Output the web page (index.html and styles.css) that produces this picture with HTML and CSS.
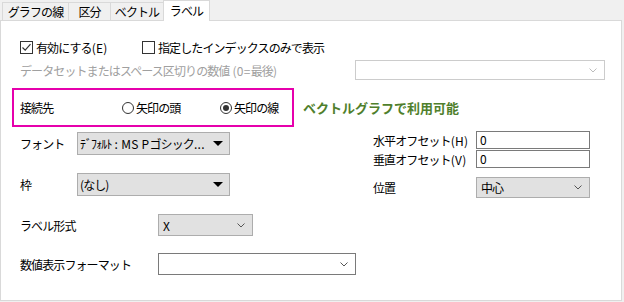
FILE: index.html
```html
<!DOCTYPE html>
<html lang="ja">
<head>
  <meta charset="UTF-8" />
  <title>ラベル</title>
  <link rel="stylesheet" href="styles.css">
</head>
<body>

<!-- tabs -->
<div class="tabs">
  <div class="tab t1">グラフの線</div>
  <div class="tab t2">区分</div>
  <div class="tab t3">ベクトル</div>
  <div class="tab t4 active">ラベル</div>
</div>

<div class="panel">

  <div class="check-row">
    <label class="check first">
      <span class="box">
        <svg viewBox="0 0 11 11" class="tick"><path d="M1.5 5.5 L4.2 8.2 L9.5 2.2" /></svg>
      </span>
      <span>有効にする<span class="lat">(E)</span></span>
    </label>
    <label class="check">
      <span class="box"></span>
      指定したインデックスのみで表示
    </label>
  </div>

  <div class="data-row">
    <span class="muted">データセットまたはスペース区切りの数値<span class="lat">&nbsp;(0=</span>最後<span class="lat">)</span></span>
    <div class="combo disabled">
      <span></span>
      <svg viewBox="0 0 8 5" class="chev"><path d="M0.5 0.5 L4 4 L7.5 0.5" /></svg>
    </div>
  </div>

  <div class="connect-row">
    <div class="connect">
      <span class="connect-label">接続先</span>
      <label class="radio r1"><span class="dot"></span>矢印の頭</label>
      <label class="radio"><span class="dot on"></span>矢印の線</label>
    </div>
    <span class="note">ベクトルグラフで利用可能</span>
  </div>

  <div class="cols">
    <div class="col-left">
      <div class="field font-row">
        <span class="lbl w57">フォント</span>
        <div class="combo classic w153">
          <span>ﾃﾞﾌｫﾙﾄ<span class="lat"> : MS P</span>ゴシック<span class="lat">...</span></span>
          <span class="tri"></span>
        </div>
      </div>
      <div class="field frame-row">
        <span class="lbl w57">枠</span>
        <div class="combo classic w153">
          <span>(なし)</span>
          <span class="tri"></span>
        </div>
      </div>
    </div>

    <div class="col-right">
      <div class="field">
        <span class="lbl w103">水平オフセット<span class="lat">(H)</span></span>
        <div class="input">0</div>
      </div>
      <div class="field off2">
        <span class="lbl w103">垂直オフセット<span class="lat">(V)</span></span>
        <div class="input">0</div>
      </div>
      <div class="field pos-row">
        <span class="lbl w103">位置</span>
        <div class="combo w114">
          <span>中心</span>
          <svg viewBox="0 0 8 5" class="chev"><path d="M0.5 0.5 L4 4 L7.5 0.5" /></svg>
        </div>
      </div>
    </div>
  </div>

  <div class="field fmt-row">
    <span class="lbl w138">ラベル形式</span>
    <div class="combo w95">
      <span>X</span>
      <svg viewBox="0 0 8 5" class="chev"><path d="M0.5 0.5 L4 4 L7.5 0.5" /></svg>
    </div>
  </div>

  <div class="field num-row">
    <span class="lbl w138">数値表示フォーマット</span>
    <div class="combo white w198">
      <span></span>
      <svg viewBox="0 0 8 5" class="chev"><path d="M0.5 0.5 L4 4 L7.5 0.5" /></svg>
    </div>
  </div>

</div>

</body>
</html>
```

FILE: styles.css
```css
body {
  margin: 0;
  background: #f0f0f0;
  font-family: "Noto Sans CJK JP", "Noto Sans", sans-serif;
  font-size: 12px;
  letter-spacing: -0.9px;
  color: #000;
  width: 624px;
  height: 302px;
  overflow: hidden;
}

/* latin bits keep normal spacing */
.lat {
  letter-spacing: 0.3px;
}

/* tabs */
.tabs {
  display: flex;
  align-items: flex-end;
  height: 20px;
  padding-left: 2px;
}

.tab {
  height: 18px;
  line-height: 18px;
  border: 1px solid #d9d9d9;
  border-bottom: none;
  border-right: none;
  background: #f0f0f0;
  text-align: center;
  box-sizing: border-box;
}

.t1 { width: 66px; }
.t2 { width: 42px; }
.t3 { width: 53px; }
.t4 { width: 47px; border-right: 1px solid #d9d9d9; }

.tab.active {
  background: #fff;
  height: 21px;
  line-height: 20px;
  margin-bottom: -1px;
  position: relative;
  z-index: 1;
}

/* panel */
.panel {
  width: 622px;
  height: 281px;
  box-sizing: border-box;
  border: 1px solid #d9d9d9;
  background: #fff;
}

.check-row {
  display: flex;
  align-items: center;
  height: 16px;
  margin-top: 18px;
  padding-left: 19px;
}

.check {
  display: flex;
  align-items: center;
  gap: 3px;
}

.check.first {
  width: 122px;
}

.box {
  width: 13px;
  height: 13px;
  box-sizing: border-box;
  border: 1px solid #333;
  background: #fff;
  display: flex;
  align-items: center;
  justify-content: center;
}

.tick {
  width: 11px;
  height: 11px;
  fill: none;
  stroke: #333;
  stroke-width: 1.2;
}

.data-row {
  display: flex;
  align-items: center;
  justify-content: space-between;
  height: 20px;
  margin-top: 5px;
  padding: 0 16px 0 19px;
}

.muted {
  color: #a0a0a0;
}

/* combos */
.combo {
  display: flex;
  align-items: center;
  justify-content: space-between;
  box-sizing: border-box;
  height: 22px;
  padding: 0 7px 0 4px;
  background: #e1e1e1;
  border: 1px solid #adadad;
}

.combo.disabled {
  width: 250px;
  height: 20px;
  background: #fff;
  border-color: #cccccc;
}

.combo.disabled .chev {
  stroke: #bcbcbc;
}

.combo.white {
  background: #fff;
  border-color: #7a7a7a;
}

.combo.classic {
  height: 23px;
  padding: 0 6px 0 2px;
}

.chev {
  width: 8px;
  height: 5px;
  fill: none;
  stroke: #555;
  stroke-width: 1;
}

.tri {
  width: 0;
  height: 0;
  border-left: 5px solid transparent;
  border-right: 5px solid transparent;
  border-top: 5px solid #000;
}

/* connect box */
.connect-row {
  display: flex;
  align-items: center;
  gap: 9px;
  margin-top: 8px;
  padding-left: 11px;
}

.connect {
  display: flex;
  align-items: center;
  width: 282px;
  height: 39px;
  box-sizing: border-box;
  border: 2px solid #e600ac;
  padding-left: 6px;
}

.connect-label {
  width: 102px;
}

.radio {
  display: flex;
  align-items: center;
  gap: 2px;
}

.radio.r1 {
  width: 98px;
}

.dot {
  width: 12px;
  height: 12px;
  box-sizing: border-box;
  border: 1px solid #333;
  border-radius: 50%;
  display: flex;
  align-items: center;
  justify-content: center;
}

.dot.on::after {
  content: "";
  width: 6px;
  height: 6px;
  border-radius: 50%;
  background: #333;
}

.note {
  color: #4f7f2c;
  font-weight: bold;
  font-size: 13px;
  letter-spacing: 0;
}

/* lower fields */
.cols {
  display: flex;
  margin-top: 4px;
}

.col-left {
  width: 353px;
  padding-left: 19px;
}

.field {
  display: flex;
  align-items: center;
}

.font-row { margin-top: 1px; }
.frame-row { margin-top: 18px; }

.lbl { flex-shrink: 0; }
.w57 { width: 57px; }
.w103 { width: 103px; }
.w138 { width: 138px; }

.w153 { width: 153px; }
.w114 { width: 114px; }
.w95 { width: 95px; }
.w198 { width: 198px; }

.input {
  width: 114px;
  height: 18px;
  box-sizing: border-box;
  border: 1px solid #7a7a7a;
  padding-left: 3px;
  line-height: 16px;
}

.off2 { margin-top: 1px; }

.pos-row {
  margin-top: 9px;
}

.pos-row .combo {
  height: 21px;
}

.fmt-row {
  margin-top: 16px;
  padding-left: 19px;
}

.num-row {
  margin-top: 17px;
  padding-left: 19px;
}
```
